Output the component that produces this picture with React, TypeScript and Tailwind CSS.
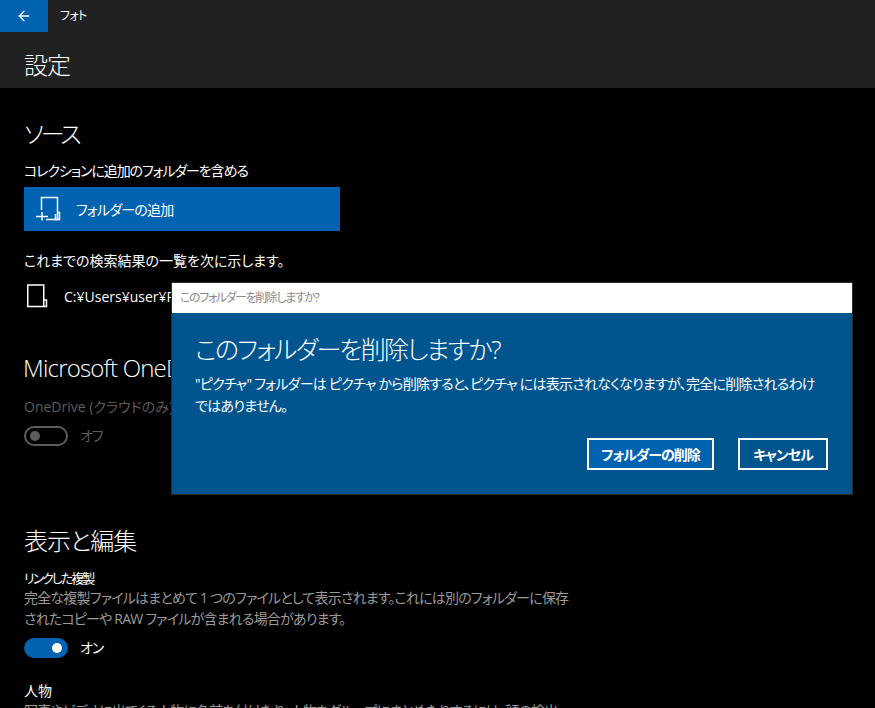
// App.tsx
import { ArrowLeft } from "lucide-react";

const FONT = "[font-family:'Open_Sans','Noto_Sans_CJK_JP',sans-serif] [font-feature-settings:'palt']";

function FolderGlyph({ plus = false }: { plus?: boolean }) {
  return (
    <svg width="26" height="26" viewBox="0 0 26 26" fill="none" stroke="currentColor" strokeWidth="1.5">
      {plus ? (
        <>
          <path d="M6.5 14V1.5H22.5V23.5H11" />
          <path d="M1 20.5H13M7 16V24.5" />
          <path d="M22.5 16.5H24.5V23.5H20.5V18" />
        </>
      ) : (
        <>
          <path d="M3.75 2H19.75V23.5H3.75Z" />
          <path d="M19.75 17H22.5V23.5H19.75" />
        </>
      )}
    </svg>
  );
}

function Toggle({ on, label }: { on: boolean; label: string }) {
  if (on) {
    return (
      <div className="flex items-center gap-[12px]">
        <div className="flex h-[20px] w-[44px] items-center justify-end rounded-full bg-[#0063b1] pr-[6px]">
          <div className="h-[10px] w-[10px] rounded-full bg-white" />
        </div>
        <span className="text-[14px] tracking-[-1px] text-white">{label}</span>
      </div>
    );
  }
  return (
    <div className="flex items-center gap-[12px]">
      <div className="flex h-[20px] w-[44px] items-center rounded-full border-2 border-[#5c5c5c] pl-[4px]">
        <div className="h-[10px] w-[10px] rounded-full bg-[#5c5c5c]" />
      </div>
      <span className="text-[14px] tracking-[-1px] text-[#5c5c5c]">{label}</span>
    </div>
  );
}

export default function App() {
  return (
    <div className={`relative h-[708px] w-[875px] overflow-hidden bg-black text-white ${FONT}`}>
      {/* Title bar */}
      <div className="bg-[#212121]">
        <div className="flex h-[32px] items-center">
          <div className="flex h-[32px] w-[48px] items-center justify-center bg-[#0063b1]">
            <ArrowLeft size={16} strokeWidth={2} />
          </div>
          <span className="ml-[12px] text-[12px] tracking-[-0.7px]">フォト</span>
        </div>
        <div className="flex h-[56px] items-start pl-[24px] pt-[15px] text-[24px] font-light leading-[36px] tracking-[-1px]">設定</div>
      </div>

      <div className="pl-[24px]">
        {/* Source */}
        <h2 className="mt-[28px] text-[24px] font-light leading-[36px] tracking-[-3px]">ソース</h2>
        <p className="mt-[9px] text-[14px] leading-[20px] tracking-[-1.1px]">コレクションに追加のフォルダーを含める</p>
        <div className="mt-[6px] flex h-[44px] w-[316px] items-center bg-[#0063b1] pl-[11px]">
          <FolderGlyph plus />
          <span className="ml-[15px] text-[14px] tracking-[-0.8px]">フォルダーの追加</span>
        </div>
        <p className="mt-[20px] text-[14px] leading-[20px]">これまでの検索結果の一覧を次に示します。</p>
        <div className="mt-[9px] flex h-[32px] items-center">
          <FolderGlyph />
          <span className="ml-[14px] text-[14px]">C:¥Users¥user¥Pictures</span>
        </div>

        {/* OneDrive */}
        <h2 className="-ml-[1px] mt-[38px] text-[24px] font-light leading-[36px] tracking-[-0.8px]">Microsoft OneDrive</h2>
        <p className="mt-[11px] text-[14px] leading-[20px] text-[#5c5c5c]">OneDrive (クラウドのみ)</p>
        <div className="mt-[8px]">
          <Toggle on={false} label="オフ" />
        </div>

        {/* View and edit */}
        <h2 className="mt-[77px] text-[24px] font-light leading-[36px] tracking-[-1px]">表示と編集</h2>
        <p className="mt-[10px] text-[13px] leading-[18px] tracking-[-2px]">リンクした複製</p>
        <p className="w-[548px] text-[14px] leading-[21px] tracking-[-0.8px] text-[#9a9a9a]">
          完全な複製ファイルはまとめて 1 つのファイルとして表示されます。これには別のフォルダーに保存されたコピーや RAW ファイルが含まれる場合があります。
        </p>
        <div className="mt-[8px]">
          <Toggle on label="オン" />
        </div>
        <p className="mt-[23px] text-[14px] leading-[20px]">人物</p>
        <p className="w-[548px] whitespace-nowrap text-[14px] leading-[20px] tracking-[-0.8px] text-[#9a9a9a]">
          写真やビデオに出てくる人物に名前を付けたり、人物をグループにまとめたりするには、顔の検出
        </p>
      </div>

      {/* Dialog */}
      <div className="absolute left-[171px] top-[282px] w-[682px] border border-[#2b2b2b] bg-[#00558f]">
        <div className="flex h-[30px] items-center bg-white pl-[8px] text-[12px] tracking-[-1.4px] text-[#8a8a8a]">
          このフォルダーを削除しますか?
        </div>
        <div className="pb-[24px] pl-[23px] pr-[24px] pt-[18px]">
          <h1 className="text-[25px] font-light leading-[36px] tracking-[-1.8px]">このフォルダーを削除しますか?</h1>
          <p className="mt-[6px] w-[625px] text-[14px] leading-[22px] tracking-[-0.75px]">
            "ピクチャ" フォルダーは ピクチャ から削除すると、ピクチャ には表示されなくなりますが、完全に削除されるわけではありません。
          </p>
          <div className="mt-[21px] flex justify-end gap-[24px]">
            <button className="h-[32px] w-[127px] border-2 border-white bg-[#0063b1] text-[14px] font-bold tracking-[-1px]">
              フォルダーの削除
            </button>
            <button className="h-[32px] w-[90px] border-2 border-white text-[14px] font-bold tracking-[-1px]">キャンセル</button>
          </div>
        </div>
      </div>
    </div>
  );
}
